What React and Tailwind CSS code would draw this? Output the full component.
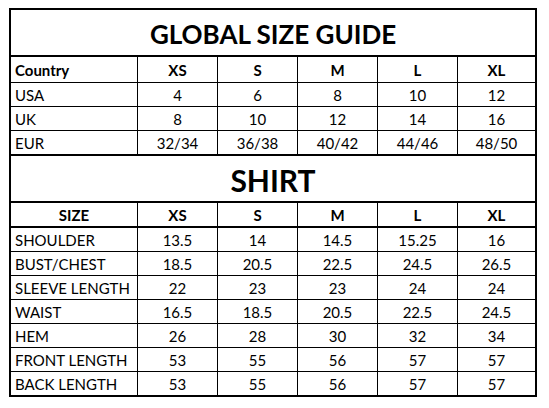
const sizes = ['XS', 'S', 'M', 'L', 'XL'];

const global = [
  ['USA', '4', '6', '8', '10', '12'],
  ['UK', '8', '10', '12', '14', '16'],
  ['EUR', '32/34', '36/38', '40/42', '44/46', '48/50'],
];

const shirt = [
  ['SHOULDER', '13.5', '14', '14.5', '15.25', '16'],
  ['BUST/CHEST', '18.5', '20.5', '22.5', '24.5', '26.5'],
  ['SLEEVE LENGTH', '22', '23', '23', '24', '24'],
  ['WAIST', '16.5', '18.5', '20.5', '22.5', '24.5'],
  ['HEM', '26', '28', '30', '32', '34'],
  ['FRONT LENGTH', '53', '55', '56', '57', '57'],
  ['BACK LENGTH', '53', '55', '56', '57', '57'],
];

function Row({ cells, className = '', bold = false, centerLabel = false }) {
  return (
    <div className={`grid grid-cols-[126px_repeat(4,80px)_1fr] ${className}`}>
      {cells.map((c, i) => (
        <div
          key={i}
          className={`flex items-center pt-[2px] ${i === 0 ? (centerLabel ? 'justify-center' : 'pl-[4px]') : 'justify-center border-l border-black'} ${bold ? 'font-bold' : ''}`}
        >
          {c}
        </div>
      ))}
    </div>
  );
}

export default function App() {
  return (
    <div className="bg-white w-[549px] h-[408px] pt-[8px] pl-[9px] text-black text-[15px] leading-none" style={{ fontFamily: 'Lato, "Open Sans", sans-serif' }}>
      <div className="w-[528px] border-2 border-black">
        {/* Global */}
        <div className="h-[47px] border-b-2 border-black flex items-center justify-center pt-[3px] font-bold text-[26px]">
          GLOBAL SIZE GUIDE
        </div>
        <Row cells={['Country', ...sizes]} bold className="h-[25px]" />
        {global.map((r) => (
          <Row key={r[0]} cells={r} className="h-[24px] border-t border-black" />
        ))}

        {/* Shirt */}
        <div className="h-[49px] border-y-2 border-black flex items-center justify-center pt-[3px] font-bold text-[30px]">
          SHIRT
        </div>
        <Row cells={['SIZE', ...sizes]} bold centerLabel className="h-[25px] border-b-2 border-black" />
        {shirt.map((r, i) => (
          <Row key={r[0]} cells={r} className={i === 0 ? 'h-[23px]' : 'h-[24px] border-t border-black'} />
        ))}
      </div>
    </div>
  );
}
